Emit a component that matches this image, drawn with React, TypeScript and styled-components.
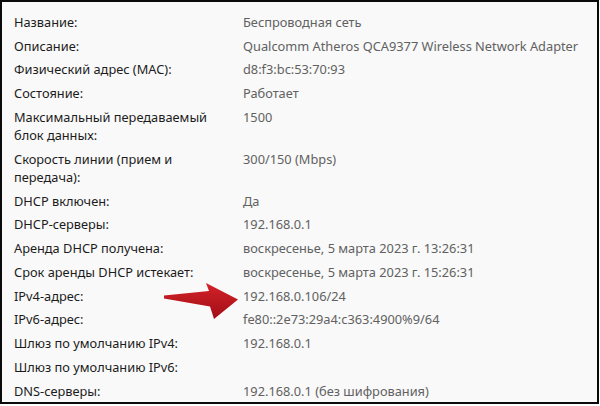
import React from "react";
import styled, { createGlobalStyle } from "styled-components";

const Global = createGlobalStyle`
  html, body { margin: 0; padding: 0; background: #ffffff; }
  body { font-family: "Noto Sans", "Open Sans", sans-serif; }
`;

const Frame = styled.div`
  position: relative;
  box-sizing: border-box;
  width: 599px;
  height: 404px;
  border: 2px solid #0a0a0a;
  background: #f9f9f9;
  overflow: hidden;
  padding: 8px 0 0 12px;
`;

const List = styled.div`
  display: flex;
  flex-direction: column;
`;

const Row = styled.div`
  display: grid;
  grid-template-columns: 229px 1fr;
  padding: 2.9px 0;
  font-size: 12.8px;
  line-height: 18px;
`;

const Label = styled.div`
  color: #1c1c1c;
  padding-right: 22px;
`;

const Value = styled.div`
  color: #616161;
  white-space: nowrap;
`;

const Arrow = styled.svg`
  position: absolute;
  left: 0;
  top: 0;
  width: 599px;
  height: 404px;
  pointer-events: none;
`;

const rows: [string, string][] = [
  ["Название:", "Беспроводная сеть"],
  ["Описание:", "Qualcomm Atheros QCA9377 Wireless Network Adapter"],
  ["Физический адрес (MAC):", "d8:f3:bc:53:70:93"],
  ["Состояние:", "Работает"],
  ["Максимальный передаваемый блок данных:", "1500"],
  ["Скорость линии (прием и передача):", "300/150 (Mbps)"],
  ["DHCP включен:", "Да"],
  ["DHCP-серверы:", "192.168.0.1"],
  ["Аренда DHCP получена:", "воскресенье, 5 марта 2023 г. 13:26:31"],
  ["Срок аренды DHCP истекает:", "воскресенье, 5 марта 2023 г. 15:26:31"],
  ["IPv4-адрес:", "192.168.0.106/24"],
  ["IPv6-адрес:", "fe80::2e73:29a4:c363:4900%9/64"],
  ["Шлюз по умолчанию IPv4:", "192.168.0.1"],
  ["Шлюз по умолчанию IPv6:", ""],
  ["DNS-серверы:", "192.168.0.1 (без шифрования)"],
];

export default function App() {
  return (
    <>
      <Global />
      <Frame>
        <List>
          {rows.map(([l, v]) => (
            <Row key={l}>
              <Label>{l}</Label>
              <Value>{v}</Value>
            </Row>
          ))}
        </List>
        <Arrow viewBox="0 0 599 404">
          <defs>
            <linearGradient id="ag" x1="0" y1="0" x2="0" y2="1">
              <stop offset="0" stopColor="#d4222a" />
              <stop offset="1" stopColor="#a10e15" />
            </linearGradient>
          </defs>
          <polygon
            points="162,293.5 207,289 204,281 236,297.5 212,317 208,304.5 162,296.5"
            fill="url(#ag)"
          />
        </Arrow>
      </Frame>
    </>
  );
}
